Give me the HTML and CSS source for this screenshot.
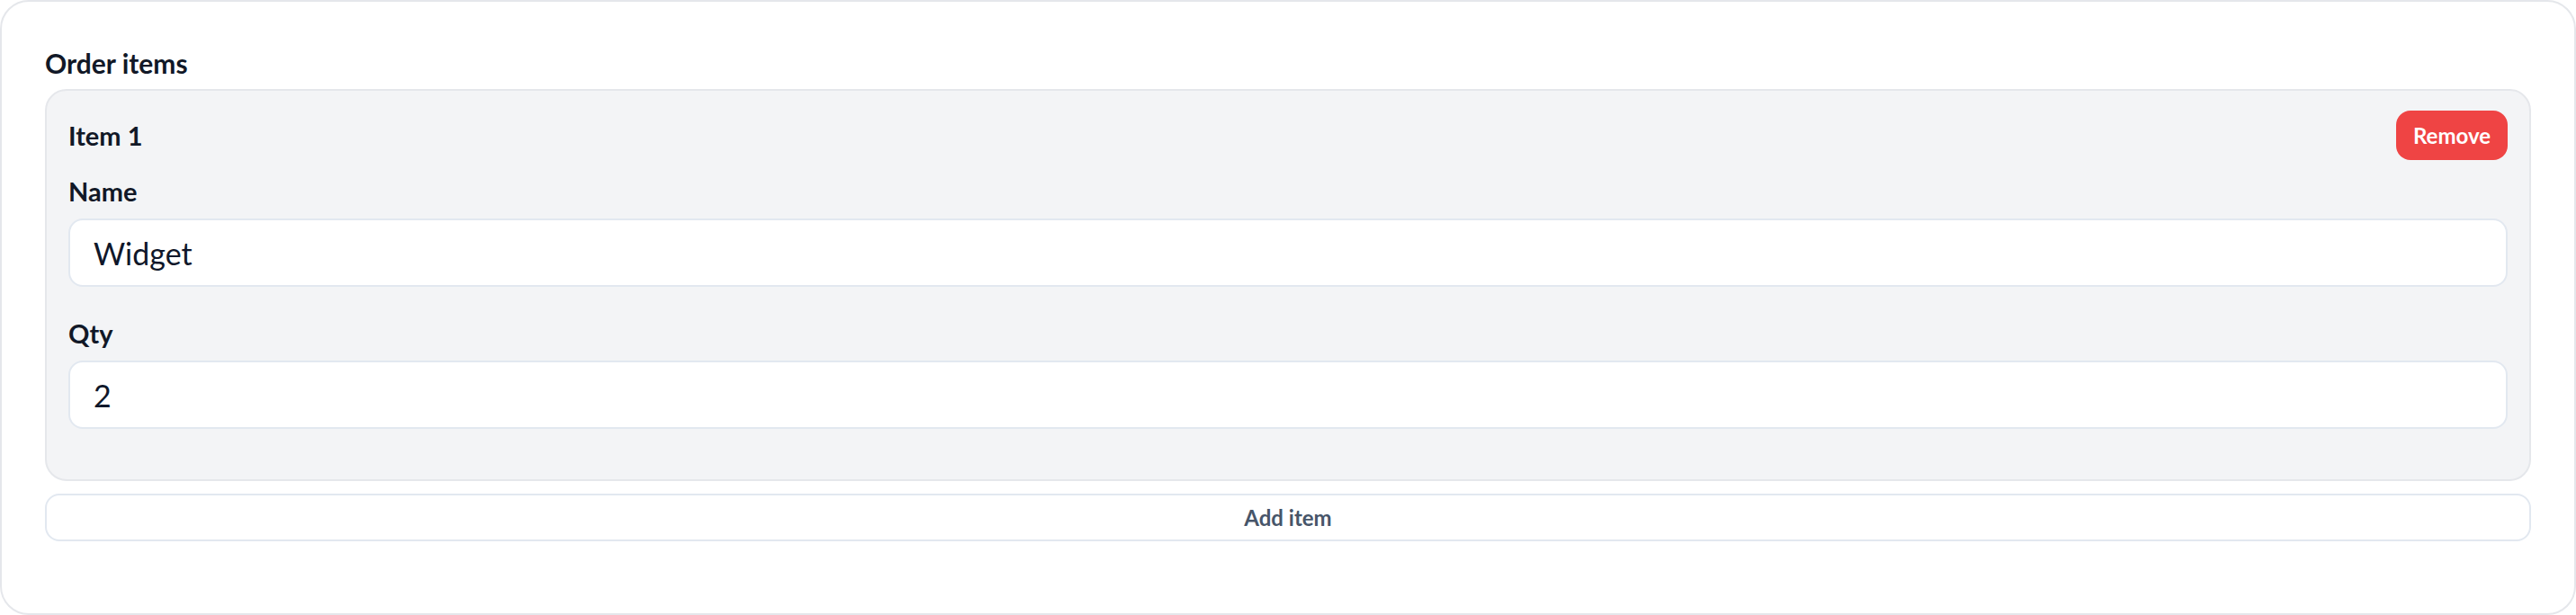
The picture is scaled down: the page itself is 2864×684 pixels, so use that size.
FILE: index.html
```html
<!DOCTYPE html>
<html>
	<head>
		<meta charset="UTF-8">
		<title>Order items</title>
		<link rel="stylesheet" href="styles.css">
	</head>
	<body>
		<div class="card">
			<div class="card-title">Order items</div>
			<div class="item">
				<div class="item-head">
					<div class="item-name">Item 1</div>
					<button class="remove" type="button">Remove</button>
				</div>
				<div class="field">
					<label class="field-label" for="name1">Name</label>
					<input class="field-input" id="name1" type="text" value="Widget">
				</div>
				<div class="field">
					<label class="field-label" for="qty1">Qty</label>
					<input class="field-input" id="qty1" type="text" value="2">
				</div>
			</div>
			<button class="add" type="button">Add item</button>
		</div>
	</body>
</html>
```

FILE: styles.css
```css
*{
	margin: 0;
	padding: 0;
	box-sizing: border-box;
}
body{
	font-family: Lato, "Noto Sans", sans-serif;
	color: #111827;
	background: #fff;
}
.card{
	border: 2px solid #e5e7eb;
	border-radius: 32px;
	padding: 48px 48px 80px;
	background: #fff;
}
.card-title{
	font-size: 30px;
	font-weight: 700;
	line-height: 40px;
	margin-bottom: 9px;
}
.item{
	background: #f3f4f6;
	border: 2px solid #e5e7eb;
	border-radius: 24px;
	padding: 22px 24px 24px;
}
.item-head{
	display: flex;
	justify-content: space-between;
	align-items: center;
	margin-bottom: 15px;
}
.item-name{
	font-size: 29px;
	font-weight: 700;
	line-height: 40px;
}
.remove{
	height: 55px;
	padding: 0 19px;
	border: none;
	border-radius: 16px;
	background: #ef4444;
	color: #fff;
	font-family: inherit;
	font-size: 24px;
	font-weight: 700;
}
.field{
	margin-bottom: 32px;
}
.field-label{
	display: block;
	font-size: 29px;
	font-weight: 700;
	line-height: 40px;
	margin-bottom: 10px;
}
.field-input{
	display: block;
	width: 100%;
	height: 76px;
	padding: 0 26px;
	border: 2px solid #e2e8f0;
	border-radius: 16px;
	background: #fff;
	color: #0f172a;
	font-family: inherit;
	font-size: 34px;
	outline: none;
}
.add{
	display: block;
	width: 100%;
	height: 53px;
	margin-top: 14px;
	border: 2px solid #e2e8f0;
	border-radius: 16px;
	background: #fff;
	color: #475569;
	font-family: inherit;
	font-size: 24px;
	font-weight: 700;
}
```
